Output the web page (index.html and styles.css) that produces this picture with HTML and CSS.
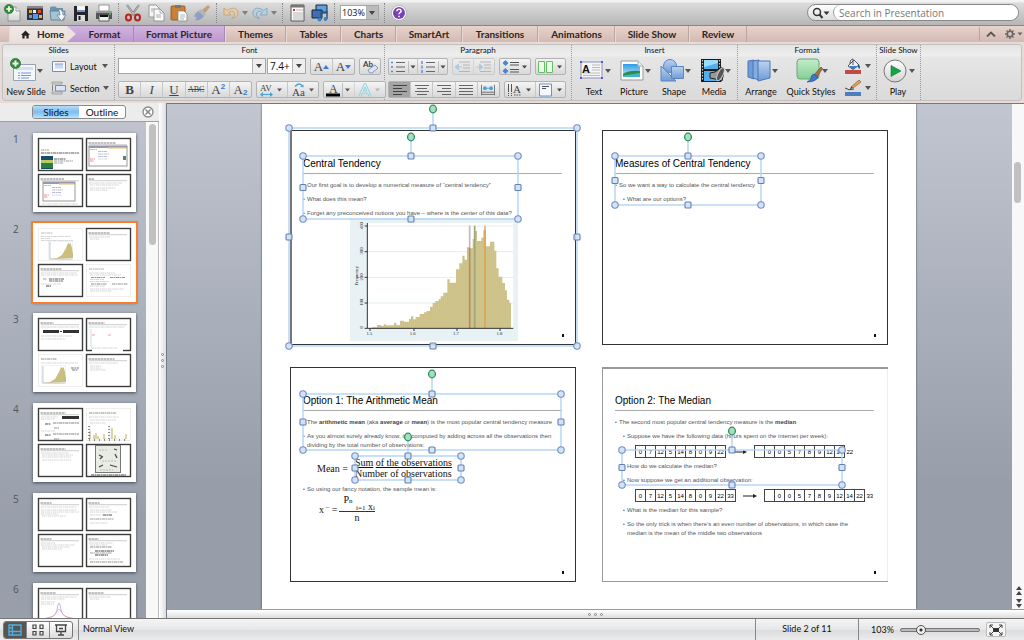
FILE: index.html
```html
<!DOCTYPE html>
<html lang="en">
<head>
<meta charset="utf-8">
<title>Presentation</title>
<link rel="stylesheet" href="styles.css">
</head>
<body>
<svg class="defs" aria-hidden="true">
  <defs>
    <linearGradient id="gBlue" x1="0" y1="0" x2="0" y2="1"><stop offset="0" stop-color="#bcd3f0"/><stop offset="1" stop-color="#6f9bd6"/></linearGradient>
    <linearGradient id="gGreen" x1="0" y1="0" x2="0" y2="1"><stop offset="0" stop-color="#c4eccb"/><stop offset="1" stop-color="#84cf93"/></linearGradient>
    <linearGradient id="gWhite" x1="0" y1="0" x2="0" y2="1"><stop offset="0" stop-color="#fff"/><stop offset="1" stop-color="#d4d4d4"/></linearGradient>
    <linearGradient id="gSky" x1="0" y1="0" x2="0" y2="1"><stop offset="0" stop-color="#2e9be6"/><stop offset="1" stop-color="#c8ecfb"/></linearGradient>
    <pattern id="bars" width="6" height="10" patternUnits="userSpaceOnUse"><rect width="6" height="10" fill="#d1c78f"/><rect width="1.5" height="10" fill="#c4b878"/></pattern>
    <symbol id="plus" viewBox="0 0 10 10"><circle cx="5" cy="5" r="4.6" fill="#2f8f36" stroke="#1d6a25" stroke-width=".6"/><path d="M5 2.3v5.4M2.3 5h5.4" stroke="#fff" stroke-width="1.7"/></symbol>
    <symbol id="lines" viewBox="0 0 14 12"><path d="M0 1.5h14M2 4.5h10M0 7.5h14M2 10.5h10" stroke="#666" stroke-width="1"/></symbol>
  </defs>
</svg>
<div class="app">
  <header class="toolbar">
    <div class="tools">
      <button aria-label="New presentation"><svg viewBox="0 0 18 18"><path d="M5 3h8l4 4v10H5z" fill="url(#gWhite)" stroke="#888" stroke-width=".8"/><path d="M13 3v4h4" fill="#eee" stroke="#888" stroke-width=".8"/><use href="#plus" x="1" y="0" width="10" height="10"/></svg></button>
      <button aria-label="Templates"><svg viewBox="0 0 18 18"><path d="M1 2h16v14H1z" fill="#33333b"/><path d="M1 2h16v2.500H1z" fill="#888"/><path d="M3 6h3v3H3z" fill="#f0a32c"/><path d="M7 6h3v3H7z" fill="#eee"/><path d="M12 6h3v3h-3z" fill="#e8482c"/><path d="M3 11h3v3H3z" fill="#51a0e6"/><path d="M7 10h5v5H7z" fill="#4e9af0"/><path d="M13 11h3v3h-3z" fill="#e7b837"/></svg></button>
      <button aria-label="Open"><svg viewBox="0 0 18 18"><path d="M1 4q0-1.500 1.500-1.500h4L8 4h6v3H1z" fill="#6b93ae"/><path d="M1 7h15l-1 9H2z" fill="#a4c4d6" stroke="#54798f" stroke-width=".8"/><path d="M9 5q5 0 5 6h3l-4.500 6L8 11h3q0-4-2-6z" fill="#f4f8fb" stroke="#668" stroke-width=".6"/></svg></button>
      <button aria-label="Save"><svg viewBox="0 0 18 18"><path d="M2 2h14v15H2z" fill="#25252b"/><path d="M5 2h8v6H5z" fill="#f5f5f5"/><path d="M5 11h8v6H5z" fill="#ddd"/><path d="M6.500 12h2v4h-2z" fill="#222"/><path d="M5 6h8v2H5z" fill="#6f94c8"/></svg></button>
      <button aria-label="Print"><svg viewBox="0 0 18 18"><path d="M4 1h10v6H4z" fill="#fff" stroke="#777" stroke-width=".7"/><path d="M1 7h16v8H1z" fill="#55565c"/><path d="M1 7h16v2H1z" fill="#999"/><path d="M4 11h10v6H4z" fill="#e8f0e8" stroke="#444" stroke-width=".8"/><path d="M5 11h8v2H5z" fill="#111"/><circle cx="15" cy="10" r=".8" fill="#5f5"/></svg></button>
      <i class="sep"></i>
      <button aria-label="Cut"><svg viewBox="0 0 18 18"><path d="M3 1l8 11M15 1L7 12" stroke="#777" stroke-width="2"/><path d="M3 1l8 11M15 1L7 12" stroke="#ddd" stroke-width=".7"/><ellipse cx="4.500" cy="13.500" rx="2.500" ry="3" fill="none" stroke="#b5231b" stroke-width="2"/><ellipse cx="13.500" cy="13.500" rx="2.500" ry="3" fill="none" stroke="#b5231b" stroke-width="2"/></svg></button>
      <button aria-label="Copy"><svg viewBox="0 0 18 18"><path d="M2 1h7l3 3v9H2z" fill="#f6f6f6" stroke="#888" stroke-width=".8"/><path d="M7 5h6l4 4v8H7z" fill="#fafafa" stroke="#888" stroke-width=".8"/><path d="M13 5v4h4M4 5h3M4 7h2M9 11h5M9 13h5" fill="none" stroke="#999" stroke-width=".8"/></svg></button>
      <button aria-label="Paste"><svg viewBox="0 0 18 18"><rect x="1" y="2" width="14" height="14" rx="1" fill="#c98235" stroke="#84501b" stroke-width=".8"/><path d="M5 1h6v3H5z" fill="#777"/><path d="M8 7h6l3 3v7H8z" fill="#fafafa" stroke="#888" stroke-width=".8"/><path d="M10 11h5M10 13h5M10 15h4" stroke="#aaa" stroke-width=".8"/></svg></button>
      <button aria-label="Format painter" class="dim"><svg viewBox="0 0 18 18"><path d="M15 1l2 2-5 6-3-3z" fill="#b98550"/><path d="M8 5l5 5-2 2-6-5z" fill="#aaa"/><path d="M5 7l6 5q-3 5-9 4 2-1 1-3-1-1-2 0 1-4 4-6z" fill="#6f8bc6"/></svg></button>
      <i class="sep"></i>
      <button aria-label="Undo" class="dim"><svg viewBox="0 0 18 18"><path d="M2 4v7h7L6.500 8.500q4-3 6 .5 1 3-3 5.500 7-1 6.500-6.500Q14 1 5 6.500z" fill="#f0cf9a" stroke="#c48d4b" stroke-width=".9"/></svg></button>
      <i class="tri dim"></i>
      <button aria-label="Redo" class="dim"><svg viewBox="0 0 18 18"><path d="M16 4v7H9l2.500-2.500q-4-3-6 .5-1 3 3 5.500Q1 13.500 2 8 4 1 13 6.500z" fill="#a9d2e8" stroke="#5e95b8" stroke-width=".9"/></svg></button>
      <i class="tri dim"></i>
      <i class="sep"></i>
      <button aria-label="Notes"><svg viewBox="0 0 18 18"><path d="M3 1h13v16H3z" fill="#fbfbfb" stroke="#555" stroke-width="1"/><path d="M3 1h13v2.500H3z" fill="#777"/><path d="M5 5h2v2H5z" fill="#d33"/><path d="M8 6h7M5 9h10M5 11h10M5 13h10M5 15h10" stroke="#999" stroke-width=".7"/></svg></button>
      <button aria-label="Media browser"><svg viewBox="0 0 18 18"><path d="M5 1h11v8H5z" fill="#5aa2e0" stroke="#223"/><path d="M1 6h10v8H1z" fill="#3d6fb1" stroke="#223"/><path d="M10 16V8h6v7" fill="none" stroke="#245a93" stroke-width="1.500"/><circle cx="8.500" cy="15.500" r="1.900" fill="#3a83c6"/><circle cx="14.500" cy="15" r="1.900" fill="#3a83c6"/></svg></button>
      <i class="sep"></i>
      <label class="combo zoom"><select aria-label="Zoom"><option>103%</option></select></label>
      <i class="sep"></i>
      <button aria-label="Help"><svg viewBox="0 0 18 18"><circle cx="9" cy="9" r="7.500" fill="#fff" stroke="#999" stroke-width=".6"/><circle cx="9" cy="9" r="6" fill="#7842b5"/><path d="M6.800 7.200q.2-2 2.200-2t2.200 1.800q0 1-1.200 1.700-1 .6-1 1.600M9 11.700v1.500" fill="none" stroke="#fff" stroke-width="1.500"/></svg></button>
    </div>
    <label class="search"><svg viewBox="0 0 20 12"><circle cx="6" cy="5" r="3.500" fill="none" stroke="#333" stroke-width="1.500"/><path d="M8.500 7.500L11.500 11" stroke="#333" stroke-width="2"/><path d="M12.500 4.500h6L15.500 8z" fill="#333"/></svg><input type="text" placeholder="Search in Presentation" aria-label="Search in Presentation"></label>
  </header>

  <nav class="tabs">
    <a href="#" class="home"><svg viewBox="0 0 10 9"><path d="M5 0l5 5H8.500v4h-2.500V6H4v3H1.500V5H0z" fill="#222"/></svg>Home</a>
    <a href="#" class="purple first">Format</a>
    <a href="#" class="purple">Format Picture</a>
    <a href="#">Themes</a>
    <a href="#">Tables</a>
    <a href="#">Charts</a>
    <a href="#">SmartArt</a>
    <a href="#">Transitions</a>
    <a href="#">Animations</a>
    <a href="#">Slide Show</a>
    <a href="#">Review</a>
    <span class="tabtools">
      <button aria-label="Collapse ribbon"><svg viewBox="0 0 10 6"><path d="M1 5.500l4-4 4 4" fill="none" stroke="#555" stroke-width="1.800"/></svg></button>
      <button aria-label="Ribbon settings"><svg viewBox="0 0 18 10"><circle cx="5" cy="5" r="2.700" fill="none" stroke="#666" stroke-width="1.600"/><path d="M5 0v2M5 8v2M0 5h2M8 5h2M1.500 1.500l1.300 1.300M7.200 7.200l1.300 1.300M1.500 8.500l1.300-1.300M7.200 2.800l1.300-1.300" stroke="#666" stroke-width="1.400"/><path d="M12.500 3.500h5L15 6.500z" fill="#666"/></svg></button>
    </span>
  </nav>

  <section class="ribbon">
    <div class="panel">
      <div class="group g-slides">
        <h2>Slides</h2>
        <div class="body">
          <button class="big"><span class="pic"><svg viewBox="0 0 28 25"><path d="M3.500 6.500h22v16h-22z" fill="#f3f6fa" stroke="#97a3b3"/><path d="M6 9h17v3H6z" fill="#d6e0ee"/><path d="M8 15h2M11 15h10M8 17.500h2M11 17.500h10M8 20h2M11 20h8" stroke="#6f9bd6"/><use href="#plus" x="0" y="0" width="11" height="11"/></svg><i class="tri"></i></span>New Slide</button>
          <div class="rows">
            <button class="lab"><svg viewBox="0 0 16 14"><path d="M1.500 2.500h13v10h-13z" fill="#f6f8fb" stroke="#7a8da8"/><path d="M4 5h8v4.500H4z" fill="#c9d8ee"/><path d="M4 5h8" stroke="#7d9fce"/></svg>Layout<i class="tri"></i></button>
            <button class="lab"><svg viewBox="0 0 16 14"><path d="M1 1h10v2H1zM1 11h10v2H1z" fill="#ddd" stroke="#888" stroke-width=".7"/><path d="M4.500 4.500h10v5.500h-10z" fill="#dbe6f5" stroke="#7a8da8"/><path d="M1.500 4v6" stroke="#888"/></svg>Section<i class="tri"></i></button>
          </div>
        </div>
      </div>

      <div class="group g-font">
        <h2>Font</h2>
        <div class="body rows">
          <div class="row">
            <label class="combo face"><select aria-label="Font"><option></option></select></label>
            <label class="combo size"><select aria-label="Font size"><option>7.4+</option></select></label>
            <span class="seg push"><button class="serif" aria-label="Grow font">A<i class="up"></i></button><button class="serif" aria-label="Shrink font">A<i class="tri blue"></i></button></span>
            <span class="seg"><button aria-label="Clear formatting"><svg viewBox="0 0 18 14"><text x="1" y="7" class="abc">Ab</text><path d="M6 10l7-5 3 3-6 5q-3 1-4-3z" fill="#dfe4f3" stroke="#7685ad" stroke-width=".8"/></svg></button></span>
          </div>
          <div class="row">
            <span class="seg six"><button class="serif"><b>B</b></button><button class="serif"><em>I</em></button><button class="serif"><u>U</u></button><button class="serif strike"><s>ABC</s></button><button class="serif">A<sup>2</sup></button><button class="serif">A<sub>2</sub></button></span>
            <span class="seg two"><button aria-label="Spacing"><svg viewBox="0 0 26 14"><text x="1" y="7.500" class="av">AV</text><path d="M1 11.500l3-2.500v5zM14 11.500l-3-2.500v5z" fill="#4ba3d6"/><path d="M3 11.500h8" stroke="#4ba3d6"/><path d="M18 5.500h5L20.500 8.500z" fill="#555"/></svg></button><button aria-label="Change case"><svg viewBox="0 0 26 14"><text x="2" y="12.500" class="av mid">Aa</text><path d="M5 3.500Q9-1 12 2.500" fill="none" stroke="#4ba3d6" stroke-width="1.400"/><path d="M10 3.500l3.500-2v3z" fill="#4ba3d6"/><path d="M19 5.500h5L21.500 8.500z" fill="#555"/></svg></button></span>
            <span class="seg two"><button aria-label="Font color"><svg viewBox="0 0 26 14"><text x="3" y="9.500" class="av big">A</text><path d="M0 10.500h14v3H0z" fill="#000"/><path d="M16.500 0v14" stroke="#aaa" stroke-width=".7"/><path d="M19 5.500h5L21.500 8.500z" fill="#555"/></svg></button><button aria-label="Text effects" class="dim"><svg viewBox="0 0 26 14"><path d="M3 13L8 1.500 13 13M5 9h6" fill="none" stroke="#3cc4d4" stroke-width="3"/><path d="M3 13L8 1.500 13 13M5 9h6" fill="none" stroke="#fff" stroke-width=".9"/><path d="M18 5.500h5L20.500 8.500z" fill="#888"/></svg></button></span>
          </div>
        </div>
      </div>

      <div class="group g-para">
        <h2>Paragraph</h2>
        <div class="body rows">
          <div class="row">
            <span class="seg two"><button aria-label="Bullets"><svg viewBox="0 0 26 12"><path d="M1 1.500h2M1 6h2M1 10.500h2" stroke="#4d86d4" stroke-width="1.600"/><path d="M6 1.500h9M6 6h9M6 10.500h9" stroke="#666"/><path d="M18.500 0v12" stroke="#aaa" stroke-width=".7"/><path d="M20.500 4.500h5L23 7.500z" fill="#444"/></svg></button><button aria-label="Numbering"><svg viewBox="0 0 26 12"><path d="M2 0v3M2 4.500v3M2 9v3" stroke="#4d86d4" stroke-width="1.300"/><path d="M6 1.500h9M6 6h9M6 10.500h9" stroke="#666"/><path d="M18.500 0v12" stroke="#aaa" stroke-width=".7"/><path d="M20.500 4.500h5L23 7.500z" fill="#444"/></svg></button></span>
            <span class="seg two dim"><button aria-label="Decrease indent"><svg viewBox="0 0 16 12"><path d="M4 1h11M8 4h7M8 7h7M4 10.500h11" stroke="#888"/><path d="M0 6l3.500-3v6zM3 6h4" stroke="#7bb3dc" fill="#7bb3dc"/></svg></button><button aria-label="Increase indent"><svg viewBox="0 0 16 12"><path d="M4 1h11M8 4h7M8 7h7M4 10.500h11" stroke="#888"/><path d="M7 6L3.500 3v6zM0 6h4" stroke="#7bb3dc" fill="#7bb3dc"/></svg></button></span>
            <span class="seg"><button aria-label="Line spacing"><svg viewBox="0 0 26 14"><path d="M3.500 0l3 3-3 3-3-3zM3.500 8l3 3-3 3-3-3z" fill="#4b86cc"/><path d="M8 2.500h9M8 5h9M8 9.500h9M8 12h9" stroke="#555"/><path d="M20 5.500h5L22.500 8.500z" fill="#444"/></svg></button></span>
            <span class="seg"><button aria-label="Columns"><svg viewBox="0 0 26 14"><path d="M1.500 1.500h6v11h-6zM9.500 1.500h6v11h-6z" fill="#eafbe9" stroke="#69bd69"/><path d="M20 5.500h5L22.500 8.500z" fill="#444"/></svg></button></span>
          </div>
          <div class="row">
            <span class="seg five"><button class="on" aria-label="Align left"><svg viewBox="0 0 14 12"><path d="M0 1.500h14M0 4.500h9M0 7.500h14M0 10.500h9" stroke="#444"/></svg></button><button aria-label="Center"><svg viewBox="0 0 14 12"><use href="#lines" width="14" height="12"/></svg></button><button aria-label="Align right"><svg viewBox="0 0 14 12"><path d="M0 1.500h14M5 4.500h9M0 7.500h14M5 10.500h9" stroke="#666"/></svg></button><button aria-label="Justify"><svg viewBox="0 0 14 12"><path d="M0 1.500h14M0 4.500h14M0 7.500h14M0 10.500h14" stroke="#666"/></svg></button><button aria-label="Distribute"><svg viewBox="0 0 16 12"><path d="M.5 0v12M15.500 0v12M1 8.500h14M1 11h14" stroke="#666"/><circle cx="4.500" cy="4" r="2.200" fill="#4ba3d6"/><circle cx="11.500" cy="4" r="2.200" fill="#4ba3d6"/><path d="M4 4h8" stroke="#4ba3d6"/></svg></button></span>
            <span class="seg two"><button aria-label="Text direction"><svg viewBox="0 0 26 14"><path d="M1.500 1v12M4.500 1v12" stroke="#555" stroke-dasharray="8 1 1 1"/><text x="6" y="9.500" class="av mid">A</text><path d="M7 12h7" stroke="#555" stroke-dasharray="1.500 1"/><path d="M19 5.500h5L21.500 8.500z" fill="#444"/></svg></button><button aria-label="Align text"><svg viewBox="0 0 26 14"><path d="M2.500 1h12v12h-12z" fill="#f4f8fe" stroke="#6f93c6"/><path d="M5 3.500h7M5 5.500h4" stroke="#555"/><path d="M20 5.500h5L22.500 8.500z" fill="#444"/></svg></button></span>
          </div>
        </div>
      </div>

      <div class="group g-insert">
        <h2>Insert</h2>
        <div class="body">
          <button class="big"><span class="pic"><svg viewBox="0 0 28 25"><path d="M3 4h21v16H3z" fill="#f5f5f7" stroke="#8894b8"/><path d="M14 7h8M14 9.500h8M14 12h8M5 15h17M5 17.500h17" stroke="#bbb"/><text x="4" y="15" class="boxa">A</text><path d="M2 3h2v2H2zM23 3h2v2h-2zM2 19h2v2H2zM23 19h2v2h-2z" fill="#5a55d8"/></svg><i class="tri"></i></span>Text</button>
          <button class="big"><span class="pic"><svg viewBox="0 0 28 25"><path d="M3 3h17l5 5v14H3z" fill="#fdfdfd" stroke="#999"/><path d="M5 6h14l3 3v10H5z" fill="url(#gSky)"/><path d="M5 16q6-4 17-3v6H5z" fill="#2e8b45"/><path d="M5 17.500l17-2.500v4H5z" fill="#3fb6c8"/><path d="M20 3v5h5" fill="#eee" stroke="#aaa"/></svg><i class="tri"></i></span>Picture</button>
          <button class="big"><span class="pic"><svg viewBox="0 0 28 25"><circle cx="12" cy="8" r="6.500" fill="url(#gBlue)" stroke="#5b86c2"/><path d="M3 8v15h15z" fill="url(#gBlue)" stroke="#5b86c2"/><path d="M13.500 8.500h12v12h-12z" fill="url(#gBlue)" stroke="#5b86c2"/></svg><i class="tri"></i></span>Shape</button>
          <button class="big"><span class="pic"><svg viewBox="0 0 28 25"><path d="M3 1h20v23H3z" fill="#18181c"/><path d="M6 2h14v9H6zM6 13h14v10H6z" fill="#4eb0ee"/><path d="M6 2h14v3L6 9z" fill="#9bdcfb"/><path d="M4.500 2v21M21.500 2v21" stroke="#ccc" stroke-width="1.200" stroke-dasharray="1.500 1.500"/><path d="M12 15l5-1 7-5q3 6 0 14l-7-2-5-1z" fill="#999" stroke="#222"/><ellipse cx="22.500" cy="16" rx="2.600" ry="7" transform="rotate(25 22 16)" fill="#555" stroke="#ccc"/></svg><i class="tri"></i></span>Media</button>
        </div>
      </div>

      <div class="group g-format">
        <h2>Format</h2>
        <div class="body">
          <button class="big"><span class="pic"><svg viewBox="0 0 28 25"><path d="M3 3l6-1v19l-6-2z" fill="#6f9bd6" stroke="#4c77b5"/><path d="M8 3l6-1v20l-6-2z" fill="#85abe0" stroke="#4c77b5"/><path d="M13 3h12v17l-12 3z" fill="url(#gBlue)" stroke="#4c77b5"/></svg><i class="tri"></i></span>Arrange</button>
          <button class="big wide"><span class="pic"><svg viewBox="0 0 28 25"><rect x="2" y="1" width="22" height="20" rx="3" fill="url(#gGreen)" stroke="#6aa877"/><path d="M26 9l1.500 1.500L22 19l-3-2z" fill="#a97548" stroke="#5c3e20" stroke-width=".6"/><path d="M19 16l4 3q-2 5-11 5 4-2 4-4 0-3 3-4z" fill="#3c78d0" stroke="#23407a" stroke-width=".6"/></svg><i class="tri"></i></span>Quick Styles</button>
          <div class="rows">
            <button class="lab" aria-label="Fill"><svg viewBox="0 0 18 16"><path d="M4 8l6-6 5 5-6 4.500z" fill="#eef" stroke="#556"/><path d="M5 8h9l-5 3.500z" fill="#3f7fc4"/><path d="M6 6q0-5 3-5v6" fill="none" stroke="#555"/><path d="M14 6q3 2 1.500 5-2-1-1.500-5" fill="#245a93"/><path d="M1 12h16v4H1z" fill="#c34a43"/></svg><i class="tri"></i></button>
            <button class="lab" aria-label="Line"><svg viewBox="0 0 18 16"><path d="M15 0l2 2-8 6-2-1z" fill="#e8a45c" stroke="#7a4a1c" stroke-width=".6"/><path d="M7 7l2 1-3 1z" fill="#222"/><path d="M1 8q4 3 9 1" fill="none" stroke="#444"/><path d="M1 12h16v4H1z" fill="#4a7fc0"/></svg><i class="tri"></i></button>
          </div>
        </div>
      </div>

      <div class="group g-show">
        <h2>Slide Show</h2>
        <div class="body">
          <button class="big"><span class="pic"><svg viewBox="0 0 28 25"><circle cx="13" cy="13" r="11" fill="url(#gWhite)" stroke="#777"/><path d="M9 7.500l10 5.500-10 5.500z" fill="#16a34a" stroke="#0c7a36" stroke-width=".6"/></svg><i class="tri"></i></span>Play</button>
        </div>
      </div>
    </div>
  </section>

  <main class="work">
    <aside class="side">
      <div class="sidehead">
        <span class="switch"><button class="on">Slides</button><button>Outline</button></span>
        <button class="close" aria-label="Close pane"><svg viewBox="0 0 12 12"><circle cx="6" cy="6" r="5" fill="#fff" stroke="#888" stroke-width="1.300"/><path d="M3.500 3.500l5 5M8.500 3.500l-5 5" stroke="#888" stroke-width="1.600"/></svg></button>
      </div>
      <div class="sidebody">
        <ol class="thumbs" id="thumbs"></ol>
        <div class="vbar"><i class="knob long"></i></div>
      </div>
    </aside>
    <div class="split"><i></i><i></i><i></i></div>
    <div class="editor">
      <div class="stage">
        <div class="canvas">
          <div class="page">
            <article class="slide heavy">
              <h3>Central Tendency</h3>
              <ul>
                <li>Our first goal is to develop a numerical measure of “central tendency”</li>
                <li>What does this mean?</li>
                <li>Forget any preconceived notions you have – where is the center of this data?</li>
              </ul>
              <svg class="chart" viewBox="208 9 504 369">
                <path d="M208 9h504v369H208z" fill="#e8f1f4"/>
                <path d="M260 24h438v316H260z" fill="#fff"/>
                <path d="M260 33h438M260 110h438M260 187h438M260 264h438" stroke="#e3eef0" stroke-width="3"/>
                <path fill="url(#bars)" d="M273 340V337H289V330H302V333H309V328H316V331H340V323H347V330H358V317H370V320H385V312H391V304H398V313H405V306H417V297H430V292H438V288H448V275H456V264H464V258H474V252H480V244H488V233H500V193H507V203H526V163H536V145H545V122H552V134H559V97H567V100H576V72H582V48H589V78H602V68H608V45H616V94H628V80H641V107H647V160H654V185H665V204H673V226H679V254H686V264H691V340Z"/>
                <path d="M567 32v68" stroke="#c9b3bd" stroke-width="5"/><path d="M567 98v242" stroke="#b98a62" stroke-width="5"/>
                <path d="M582 32v308" stroke="#9ea778" stroke-width="5"/><path d="M613 32v308" stroke="#dd9f4a" stroke-width="4"/>
                <path d="M260 24v316h438M252 33h8M252 110h8M252 187h8M252 264h8M252 340h8M268 340v8M400 340v8M529 340v8M658 340v8" fill="none" stroke="#333" stroke-width="3"/>
                <g class="ticks">
                  <text x="266" y="359">1.5</text><text x="396" y="359">1.6</text><text x="526" y="359">1.7</text><text x="656" y="359">1.8</text>
                  <text transform="translate(246 338) rotate(-90)">0</text><text transform="translate(246 262) rotate(-90)">100</text><text transform="translate(246 186) rotate(-90)">200</text><text transform="translate(246 108) rotate(-90)">300</text><text transform="translate(246 32) rotate(-90)">400</text>
                  <text transform="translate(231 182) rotate(-90)">Frequency</text>
                </g>
              </svg>
              <i class="folio"></i>
              <svg class="marks" viewBox="290 130 286 215" data-boxes="289,128,577,346,433,109;303,156,518,219,411,137"></svg>
            </article>

            <article class="slide">
              <h3>Measures of Central Tendency</h3>
              <ul>
                <li>So we want a way to calculate the central tendency</li>
                <li class="in">What are our options?</li>
              </ul>
              <i class="folio"></i>
              <svg class="marks" viewBox="602 130 286 215" data-boxes="615,156,761,205,688,137"></svg>
            </article>

            <article class="slide">
              <h3>Option 1: The Arithmetic Mean</h3>
              <ul>
                <li>The <b>arithmetic mean</b> (aka <b>average</b> or <b>mean</b>) is the most popular central tendency measure</li>
                <li>As you almost surely already know, it’s computed by adding across all the observations then dividing by the total number of observations:</li>
              </ul>
              <div class="math">Mean = <span class="frac"><span><u>Sum</u> <u>of the observations</u></span><span>Number of observations</span></span></div>
              <ul>
                <li>So using our fancy notation, the sample mean is:</li>
              </ul>
              <div class="math second"><span>x<sup> –</sup> =</span><span class="frac bar"><span class="top">P<small>n</small></span><span class="num"><small>i=1</small> x<small>i</small></span><span class="den">n</span></span></div>
              <i class="folio"></i>
              <svg class="marks" viewBox="290 367 286 215" data-boxes="303,394,561,450,432,374;355,456,461,480,408,437"></svg>
            </article>

            <article class="slide soft">
              <h3>Option 2: The Median</h3>
              <ul>
                <li>The second most popular central tendency measure is the <b>median</b></li>
                <li class="in">Suppose we have the following data (hours spent on the internet per week):</li>
              </ul>
              <div class="data">
                <table><tr><td>0<td>7<td>12<td>5<td>14<td>8<td>0<td>9<td>22</table>
                <svg viewBox="0 0 14 6"><path d="M0 3h11" stroke="#222"/><path d="M10 1l4 2-4 2z" fill="#222"/></svg>
                <table><tr><td><td>0<td>0<td>5<td>7<td>8<td>9<td>12<td>14<td class="out">22</table>
              </div>
              <ul>
                <li class="in">How do we calculate the median?</li>
                <li class="in">Now suppose we get an additional observation:</li>
              </ul>
              <div class="data">
                <table><tr><td>0<td>7<td>12<td>5<td>14<td>8<td>0<td>9<td>22<td>33</table>
                <svg viewBox="0 0 14 6"><path d="M0 3h11" stroke="#222"/><path d="M10 1l4 2-4 2z" fill="#222"/></svg>
                <table><tr><td><td>0<td>0<td>5<td>7<td>8<td>9<td>12<td>14<td>22<td class="out">33</table>
              </div>
              <ul>
                <li class="in">What is the median for this sample?</li>
                <li class="in narrow">So the only trick is when there’s an even number of observations, in which case the median is the mean of the middle two observations</li>
              </ul>
              <i class="folio"></i>
              <svg class="marks" viewBox="602 367 286 215" data-boxes="622,450,842,485,732,431"></svg>
            </article>
          </div>
        </div>
        <div class="vbar right"><i class="knob"></i><svg viewBox="0 0 10 24"><path d="M5 1l3 4H2zM5 6l3 4H2zM2 14h6l-3 4zM2 19h6l-3 4z" fill="#444"/></svg></div>
      </div>
      <div class="notes"><i></i><i></i><i></i></div>
    </div>
  </main>

  <footer class="status">
    <span class="views">
      <button class="on" aria-label="Normal view"><svg viewBox="0 0 14 12"><path d="M1 1h12v10H1zM4.500 1v10M1 7.500h12M1 4h3.500" fill="none" stroke="#55aee0" stroke-width="1.300"/></svg></button>
      <button aria-label="Slide sorter"><svg viewBox="0 0 14 12"><path d="M2 1h3v3.500H2zM9 1h3v3.500H9zM2 7.500h3V11H2zM9 7.500h3V11H9z" fill="none" stroke="#444" stroke-width="1.200"/></svg></button>
      <button aria-label="Slide show"><svg viewBox="0 0 14 12"><path d="M1 1h12M2.500 1v6.500h9V1M7 7.500V11M4 11h6M5 4.500h4" fill="none" stroke="#444" stroke-width="1.300"/></svg></button>
    </span>
    <span class="cell mode">Normal View</span>
    <span class="cell count">Slide 2 of 11</span>
    <span class="cell zoomer"><label for="zoom">103%</label><input id="zoom" type="range" min="0" max="100" value="22"><button class="fit" aria-label="Fit to window"><svg viewBox="0 0 14 12"><path d="M4 4h6v4H4z" fill="#333"/><path d="M1 4V1h3M10 1h3v3M13 8v3h-3M4 11H1V8M1 1l3 3M13 1l-3 3M13 11l-3-3M1 11l3-3" fill="none" stroke="#333" stroke-width=".9"/></svg></button></span>
  </footer>
</div>
<script src="app.js"></script>
</body>
</html>
```

FILE: styles.css
```css
* { box-sizing: border-box; }
body { margin: 0; font: 9px/11px Lato, "Open Sans", sans-serif; color: #111; }
button { font: inherit; color: inherit; background: none; border: 0; padding: 0; display: flex; align-items: center; justify-content: center; }
a { color: inherit; text-decoration: none; }
h2, h3, ul, ol { margin: 0; padding: 0; font-weight: 400; list-style: none; }
svg { display: block; flex: none; }
.defs { position: absolute; width: 0; height: 0; }
.app { display: flex; flex-direction: column; height: 100vh; overflow: hidden; background: #cfc5c2; }
.dim { opacity: .5; }

.tri { flex: none; border: 3px solid transparent; border-top: 4px solid #555; border-bottom: 0; }
.tri.blue { border-top-color: #3f78d0; }
.up { flex: none; border: 3px solid transparent; border-bottom: 4px solid #3f78d0; border-top: 0; }

/* toolbar */
.toolbar { flex: none; height: 26px; display: flex; align-items: center; justify-content: space-between; padding: 0 5px 0 3px; background: linear-gradient(#f2f2f2 2px, #dcdcdc 3px, #b6b6b6); border-bottom: 1px solid #8a8482; }
.tools { display: flex; align-items: center; gap: 5px; }
.tools button svg { width: 18px; height: 18px; }
.tools .dim { opacity: .65; }
.tools .tri { margin-left: -3px; }
.tools .tri + button { margin-left: -2px; }
.sep { width: 1px; height: 20px; border-left: 1px dotted #888; }
.combo { position: relative; display: flex; height: 16px; background: #fff; border: 1px solid #a5a5a5; }
.combo select { appearance: none; width: 100%; border: 0; padding: 0 2px; background: none; font: 10px/14px "Open Sans", sans-serif; color: #111; }
.combo::after { content: ""; position: absolute; right: 3px; top: 5px; border: 3px solid transparent; border-top: 4px solid #444; border-bottom: 0; }
.combo::before { content: ""; position: absolute; right: 0; top: 0; bottom: 0; width: 12px; border-left: 1px solid #b5b5b5; background: #eee; }
.combo.zoom { width: 39px; height: 15px; }
.combo.zoom select { padding: 0 1px; font-size: 9px; line-height: 13px; }
.combo.zoom::before { background: #bbb; width: 11px; }
.search { display: flex; align-items: center; width: 212px; height: 17px; border: 1px solid #888; border-radius: 9px; background: linear-gradient(#fff, #ddd); overflow: hidden; }
.search svg { width: 20px; height: 12px; margin: 0 2px 0 3px; }
.search input { flex: 1; min-width: 0; height: 15px; border: 0; border-left: 1px solid #999; border-radius: 8px; padding: 0 5px; font: 10px/14px "Open Sans", sans-serif; background: #fff; }
.search input::placeholder { color: #777; }

/* tabs */
.tabs { flex: none; display: grid; grid-template-columns: 67px 67px 91px 61px 55px 55px 66px 76px 77px 74px 58px 1fr; height: 16px; background: linear-gradient(#e6d3cc, #d3bab2); font: 700 10px/16px Lato, sans-serif; color: #2c2624; }
.tabs a { display: flex; align-items: center; justify-content: center; border-right: 1px solid #bda69f; border-left: 1px solid #e9d9d4; }
.tabs .home { position: relative; margin-left: 9px; padding-left: 8px; gap: 7px; border-right: 0; background: linear-gradient(#f2e8e5, #e9dfdb); }
.tabs .home::after { content: ""; position: absolute; left: 100%; top: 0; border: solid transparent; border-width: 8px 0 8px 9px; border-left-color: #ece2de; }
.tabs .home svg { width: 9px; height: 9px; }
.tabs .purple { background: linear-gradient(#d0b4de, #bd98cf); border-color: #a989b8; border-left: 0; }
.tabs .first { padding-left: 9px; }
.tabtools { display: flex; justify-content: flex-end; align-items: center; gap: 9px; padding-right: 1px; }
.tabtools svg { height: 6px; width: 10px; }
.tabtools button:first-child { border-left: 1px solid #bda69f; height: 14px; padding-left: 6px; }
.tabtools button:last-child svg { width: 18px; height: 10px; }

/* ribbon */
.ribbon { flex: none; padding: 2px 2px 2px; background: #e6dbd7; }
.panel { display: flex; height: 57px; border: 1px solid #c5bfbd; border-radius: 3px; background: linear-gradient(#e4e4e4, #eee 11px, #e6e6e6 12px, #dadada); }
.group { flex: none; padding: 0 3px; border-right: 1px dotted #999; }
.group h2 { height: 11px; text-align: center; font-size: 8px; line-height: 11px; }
.body { display: flex; padding-top: 2px; }
.rows { display: flex; flex-direction: column; gap: 6px; }
.row { display: flex; gap: 4px; height: 17px; }
.g-slides { width: 112px; }
.g-font { width: 270px; }
.g-para { width: 187px; }
.g-insert { width: 166px; padding: 0 2px; }
.g-format { width: 139px; }
.g-show { width: 44px; padding: 0 1px; white-space: nowrap; }
.big { flex-direction: column; width: 40px; gap: 3px; white-space: nowrap; }
.big .pic { display: flex; align-items: center; }
.big .pic svg { width: 28px; height: 25px; }
.big .tri { margin-left: -1px; }
.wide { width: 60px; }
.g-slides .rows { margin-left: 5px; }
.lab { height: 16px; gap: 3px; }
.lab svg { width: 16px; height: 14px; }
.lab .tri { margin-left: auto; }
.g-slides .lab { width: 57px; justify-content: flex-start; }
.g-format .rows .lab svg { width: 18px; height: 16px; }
.g-format .rows { margin-left: 3px; }

.seg { display: flex; border: 1px solid #b3b3b3; border-radius: 2px; background: linear-gradient(#f4f4f4, #d8d8d8); height: 17px; }
.seg button { flex: 1; padding: 0 2px; border-left: 1px solid #c6c6c6; }
.seg button:first-child { border-left: 0; }
.seg svg { height: 14px; width: 26px; }
.seg .on { background: #a4a4a4; }
.seg.six { flex: 135; }
.seg.two { flex: 61; }
.row .seg.push { width: 45px; }
.g-font .row .seg:last-child:not(.two) { width: 22px; }
.g-font .row:first-child .seg svg { width: 18px; }
.g-font .seg.six button { width: 22px; }
.serif { font: 13px/15px "Liberation Serif", serif; color: #444; }
.serif sup, .serif sub { font-size: 8px; line-height: 8px; color: #3f78d0; font-weight: 700; font-family: "Liberation Sans", sans-serif; }
.serif sup { margin-bottom: 6px; }
.serif sub { margin-top: 6px; }
.strike { font-size: 8px; }
.face { flex: 1; }
.size { width: 39px; margin-left: -3px; }
.abc { font: 700 8px Lato, sans-serif; fill: #444; }
.av { font: 9px "Liberation Serif", serif; fill: #444; }
.av.mid { font-size: 11px; }
.av.big { font-size: 12px; }
.boxa { font: 700 11px "Liberation Sans", sans-serif; fill: #111; }
.g-para .row { width: 178px; }
.g-para .seg.five { flex: 112; }
.g-para .seg.five svg { width: 14px; height: 12px; }
.g-para .seg:not(.two):not(.five) { flex: 31; }
.g-para .dim { flex: 44; }
.g-para .dim svg { width: 16px; height: 12px; }
.g-para .row:first-child .two:not(.dim) svg { height: 12px; }
.g-para .seg button { padding: 0; }

/* work area */
.work { flex: 1; min-height: 0; display: flex; }
.side { flex: none; width: 159px; display: flex; flex-direction: column; }
.sidehead { flex: none; display: flex; align-items: center; justify-content: space-between; height: 19px; padding: 0 5px 0 32px; background: #ececec; border-bottom: 1px solid #9a9fa8; }
.switch { display: flex; width: 94px; height: 14px; border: 1px solid #8b8b8b; border-radius: 3px; background: #fff; overflow: hidden; font: 10px/12px Lato, sans-serif; }
.switch button { flex: 1; }
.switch .on { background: linear-gradient(#b9dcf8, #7cbcf0 50%, #b5e4fd); }
.close svg { width: 12px; height: 12px; }
.sidebody { flex: 1; min-height: 0; display: flex; background: linear-gradient(#bec3cd, #989fab 80%); }
.thumbs { flex: 1; display: flex; flex-direction: column; gap: 11px; padding: 11px 10px 0 13px; overflow: hidden; }
.thumbs li { flex: none; display: flex; justify-content: space-between; font: 10px/12px "Open Sans", sans-serif; color: #555; }
.thumbs svg { width: 103px; height: 79px; background: #fff; box-shadow: 0 1px 3px #444b58; }
.thumbs .current svg { outline: 2px solid #fb7c2b; }
.vbar { flex: none; display: flex; flex-direction: column; width: 13px; padding: 2px 3px; background: #f8f8f8; border-right: 1px solid #bbb; }
.knob { width: 7px; height: 41px; border-radius: 4px; background: #c1c1c1; }
.knob.long { height: 121px; }
.split { flex: none; width: 8px; display: flex; flex-direction: column; align-items: center; justify-content: center; gap: 3px; background: linear-gradient(90deg, #fff, #ddd); border-right: 1px solid #777d88; }
.split i, .notes i { width: 3px; height: 3px; border: 1px solid #888; border-radius: 2px; }
.editor { flex: 1; min-width: 0; display: flex; flex-direction: column; }
.stage { flex: 1; min-height: 0; display: flex; border-top: 1px solid #777; }
.canvas { flex: 1; min-width: 0; display: flex; padding: 0 96px 0 95px; background: linear-gradient(#c1c6d0, #979eaa 75%); overflow: hidden; }
.page { flex: 1; display: grid; grid-template: 1fr 1fr / 1fr 1fr; gap: 22px 26px; padding: 26px 28px 27px; background: #fff; box-shadow: 0 0 2px #444; }
.right { width: 12px; border: 0; justify-content: space-between; padding: 58px 2px 0; }
.right svg { width: 10px; height: 24px; }
.notes { flex: none; height: 9px; display: flex; align-items: center; justify-content: center; gap: 3px; background: linear-gradient(#fff, #ddd); border-top: 1px solid #999; }

/* slides */
.slide { position: relative; padding: 28px 13px 0; box-shadow: inset 0 0 0 1px #333; font: 6px/9px "Liberation Sans", Arial, sans-serif; color: #555; }
.heavy { box-shadow: inset 2px 0 #777, inset 0 0 0 1px #333; }
.soft { box-shadow: inset 1px 2px #999, inset 0 -1px #999, inset -1px 0 #eee; }
.slide h3 { font-size: 10px; line-height: 12px; color: #000; padding-bottom: 3px; margin: 0 1px 7px 0; border-bottom: 1px solid #aaa; }
.slide li { position: relative; padding-left: 4px; margin-bottom: 5px; }
.slide li::before { content: "•"; position: absolute; left: 0; font-size: 5px; }
.slide .in { margin-left: 8px; }
.slide .narrow { margin-right: 20px; }
.slide b { color: #444; }
.folio { position: absolute; right: 12px; bottom: 8px; width: 2px; height: 3px; background: #111; }
.chart { width: 168px; height: 123px; margin: -5px 0 0 47px; }
.ticks { font: 14px "Liberation Serif", serif; fill: #222; text-anchor: middle; }
.marks { position: absolute; left: 0; top: 0; width: 286px; height: 215px; overflow: visible; }
.math { display: flex; align-items: center; gap: 6px; margin: 7px 0 6px 14px; font: 10px/11px "Liberation Serif", serif; color: #111; }
.frac { display: flex; flex-direction: column; padding-left: 1px; }
.math.second { gap: 1px; margin: -3px 0 0 16px; }
.math.second sup, .math small { font-size: 7px; line-height: 6px; }
.bar { align-items: center; width: 36px; }
.top { align-self: flex-start; height: 7px; line-height: 7px; padding-left: 4px; }
.num { width: 36px; height: 9px; text-align: right; line-height: 8px; border-bottom: 1px solid #333; }
.den { line-height: 12px; }
.data { display: flex; align-items: center; gap: 7px; margin: -1px 0 4px 20px; }
.data svg { width: 14px; height: 6px; }
.data table { border-collapse: collapse; table-layout: fixed; font: 6px/10px "Liberation Sans", Arial, sans-serif; color: #000; }
.data td { width: 10px; min-width: 10px; height: 12px; padding: 0; border: 1px solid #444; text-align: center; }
.data .out { border: 0; }

/* status bar */
.status { flex: none; height: 22px; display: flex; align-items: center; background: linear-gradient(#f4f4f4, #e6e7e9 50%, #dadbdd 51%, #ececec); border-top: 1px solid #777; font: 9px/20px Lato, sans-serif; }
.views { display: flex; width: 70px; height: 18px; margin: 0 5px 0 3px; border: 1px solid #777; border-radius: 3px; background: linear-gradient(#fff, #ddd); overflow: hidden; }
.views button { flex: 1; border-left: 1px solid #888; }
.views button:first-child { border-left: 0; }
.views .on { background: #555; }
.views svg { width: 14px; height: 12px; }
.cell { border-left: 1px solid #888; height: 21px; padding-left: 4px; }
.mode { flex: 1; }
.count { width: 103px; padding: 0; text-align: center; }
.zoomer { display: flex; align-items: center; gap: 6px; width: 166px; padding-left: 12px; }
.zoomer input { appearance: none; width: 80px; height: 4px; margin: 0; border: 1px solid #777; border-radius: 2px; background: #bbb; }
.zoomer input::-webkit-slider-thumb { appearance: none; width: 10px; height: 10px; border: 1px solid #555; border-radius: 50%; background: radial-gradient(#333 1px, #eee 2px); }
.fit { width: 20px; height: 15px; border: 1px solid #bbb; border-radius: 2px; background: #f4f4f4; }
.fit svg { width: 14px; height: 12px; }
```

FILE: app.js
```js
// Selection frames: "left,top,right,bottom,rotateX,rotateY", separated by semicolons.
document.querySelectorAll('.marks').forEach(function (svg) {
  var out = '';
  svg.dataset.boxes.split(';').forEach(function (box) {
    var v = box.split(',').map(Number), l = v[0], t = v[1], r = v[2], b = v[3], x = v[4], y = v[5];
    var my = (t + b) / 2;
    out += '<path d="M' + l + ' ' + t + 'H' + r + 'V' + b + 'H' + l + 'ZM' + x + ' ' + t + 'V' + y + '" fill="none" stroke="#b4d1f5" stroke-opacity=".7" stroke-width="2"/>';
    [[l, t], [r, t], [l, b], [r, b]].forEach(function (p) {
      out += '<circle cx="' + p[0] + '" cy="' + p[1] + '" r="3.2" fill="#d3e1f4" fill-opacity=".9" stroke="#6f8ec6" stroke-width="1.1"/>';
    });
    [[x, t], [x, b], [l, my], [r, my]].forEach(function (p) {
      out += '<rect x="' + (p[0] - 3) + '" y="' + (p[1] - 3) + '" width="6" height="6" rx="1" fill="#d3e1f4" fill-opacity=".9" stroke="#6180b4" stroke-width="1.1"/>';
    });
    out += '<ellipse cx="' + x + '" cy="' + y + '" rx="3.4" ry="3.8" fill="#a5dfbd" stroke="#2f9160" stroke-width="1.3"/>';
  });
  svg.innerHTML = out;
});

// Thumbnails: each quarter has a frame style, a title width and text rows [x, y, width].
var origin = [[5, 5], [53, 5], [5, 41], [53, 41]];
function rect(x, y, w, h, c) { return '<rect x="' + x + '" y="' + y + '" width="' + w + '" height="' + h + '" fill="' + c + '"/>'; }
function row(x, y, w, c) { return '<path d="M' + x + ' ' + y + 'h' + w + '" stroke="' + (c || '#ccc') + '" stroke-width=".8" stroke-dasharray="3 .5 2 .5"/>'; }
function quarter(i, q) {
  var f = q.soft ? '#ddd' : '#3c3c3c';
  var s = '<g transform="translate(' + origin[i] + ')"><rect x=".5" y=".5" width="44" height="32" fill="#fff" stroke="' + f + '" stroke-width="' + (q.soft ? 0.5 : 1.4) + '"/>';
  if (q.title) s += row(2.5, 5, q.title, '#666') + '<path d="M3 6.700h38" stroke="#aaa" stroke-width=".6"/>';
  (q.rows || []).forEach(function (r) { s += row(r[0], r[1], r[2], r[3]); });
  return s + (q.art || '') + '</g>';
}
function hist(x, y) {
  return rect(x, y, 25, 19, '#edf4f6') + rect(x + 2, y + 1, 22, 17, '#fff') + '<path d="M' + (x + 2) + ' ' + (y + 18) + 'l7-1 5-3 4-7 2-5 1.500 1 1-1 1.500 5 1 6v4z" fill="#cbbf7f"/><path d="M' + (x + 2) + ' ' + (y + 1) + 'v17h22" fill="none" stroke="#999" stroke-width=".5"/>';
}
function shot(x, y, w, h) {
  return '<rect x="' + x + '" y="' + y + '" width="' + w + '" height="' + h + '" fill="#fff" stroke="#999" stroke-width="1"/>' + rect(x, y, w, 2, '#99a') + rect(x + w / 2, y + 1, w / 2 - 1, 1.5, '#e9bd62') + row(x + 1, y + 3.5, 7, '#d99') + row(x + 9, y + 5.5, 9, '#aac') + row(x + 9, y + 8, 11, '#aac') + row(x + 9, y + 10.5, 9, '#aac') + row(x + 1, y + 13, 5, '#e77') + row(x + 1, y + 15, 4, '#d77') + row(x + 9, y + 13, 10, '#ccd');
}
var body = [[3, 9, 36], [3, 11.5, 31]];
var decks = [
  [{ rows: [[3, 12, 8, '#888'], [3, 15, 38, '#333'], [16, 21, 12, '#333'], [16, 23, 19, '#888'], [16, 25, 9, '#888']], art: rect(3, 18, 12, 13, '#14506a') + rect(3, 22, 12, 3, '#b9c96b') + rect(3, 25, 12, 5, '#2c803a') },
    { title: 27, art: shot(3, 8, 38, 20) + rect(37, 18, 3, 4, '#587') }, { title: 24, art: shot(5, 8, 32, 19), rows: [[4, 30, 36]] }, { title: 6, rows: [[3, 9, 33], [4, 11, 29], [4, 14, 25], [4, 16, 18]] }],
  [{ soft: 1, rows: [[3, 5, 12, '#aaa'], [3, 8.5, 30], [3, 10.5, 9], [3, 12.5, 32]], art: hist(10, 13) }, { title: 21, rows: [[3, 9, 21], [4, 11, 9]] },
    { title: 21, rows: [[3, 9, 36], [3, 11, 37], [11, 15, 15, '#333'], [11, 17, 14, '#444'], [5, 15, 4, '#888'], [3, 20, 20], [8, 22, 5, '#111']] }, { soft: 1, rows: [[3, 5, 15, '#999'], [3, 9, 26], [4, 11, 31], [5, 13.5, 14, '#777'], [24, 13.5, 15, '#777'], [4, 15.5, 14], [4, 17.5, 19], [5, 20, 16, '#777'], [26, 20, 16, '#777'], [4, 22, 15], [4, 25, 34], [4, 27, 22]] }],
  [{ title: 13, rows: [[3, 9, 38], [3, 18, 31], [3, 21, 25]], art: rect(5, 12, 16, 3, '#333') + rect(25, 12, 16, 3, '#333') + rect(22, 13, 2, 1, '#333') }, { title: 16, rows: [[3, 9, 36], [6, 17, 3, '#e88'], [22, 17, 3, '#e88'], [5, 30, 26]], art: '<path d="M5 11v18" stroke="#9cc" stroke-width=".6"/>' + rect(6, 31, 31, 3, '#fff') },
    { soft: 1, rows: [[3, 5, 16, '#777'], [3, 9, 37], [33, 14, 8, '#555'], [34, 16, 6, '#555']], art: hist(3, 11) }, { title: 26, rows: [[3, 9, 29], [4, 12, 11], [4, 14, 12], [4, 16, 16]] }],
  [{ title: 25, rows: [[3, 9, 17], [3, 11, 14], [7, 16, 6, '#222'], [15, 15, 26, '#666'], [16, 20, 5, '#777'], [3, 23, 14], [7, 27, 6, '#222'], [15, 26, 26, '#666'], [16, 31, 5, '#777']], art: rect(24, 8, 17, 3, '#333') },
    { soft: 1, rows: [[3, 5, 27, '#777'], [3, 9, 30], [4, 12, 26], [4, 15, 16]], art: '<path d="M4 18v13h17M24 18v13h17" fill="none" stroke="#dde8ea" stroke-width=".8"/><path d="M4 31v-8M8 31v-4M10 31v-6M12 31v-3M18 31v-5M26 31V20M29 31v-4M40 31v-5" fill="none" stroke="#c9bb72" stroke-width="1.200"/><path d="M3 18v13M23 18v13" stroke="#222" stroke-dasharray="1 2"/><path d="M3 32h39" stroke="#222" stroke-dasharray="1 4"/>' },
    { title: 25, rows: [[3, 9, 28], [4, 11, 31], [4, 13, 29], [4, 16, 29]] }, { rows: [[5, 31, 35, '#222']], art: rect(9, 1, 26, 28, '#777') + rect(10, 2, 24, 26, '#e9ebe5') + '<path d="M13 11l4 2M28 5l3 1M14 15l2-2M29 10l2 4M24 21l7 2M13 23l4-2" stroke="#454b45" stroke-width="1.300"/><path d="M13 6h9M16 17h14M14 26h13" stroke="#a9b0a6" stroke-width=".8" stroke-dasharray="2 1"/>' }],
  [{ title: 11, rows: [[3, 9, 36], [3, 12, 36], [3, 14, 38], [3, 16, 18], [4, 18, 24]] }, { title: 11, rows: [[3, 9, 20], [4, 12, 22], [4, 14, 27], [4, 17, 13], [17, 17, 9, '#222'], [4, 21, 24, '#888'], [4, 25, 18]] },
    { title: 11, rows: [[3, 9, 14], [3, 11, 34], [4, 13, 28], [4, 15, 20]] }, { title: 10, rows: [[3, 9, 24], [4, 11, 18], [4, 13, 22, '#777'], [9, 17, 19, '#111'], [4, 19, 22, '#888'], [9, 21, 13, '#111'], [3, 25, 31], [4, 28, 33, '#777']] }],
  [{ title: 15, rows: [[3, 9, 36], [3, 11, 24], [3, 14, 14], [3, 16, 13]], art: '<path d="M9 30q8 0 10-8 1-7 2-7t2 7q2 8 10 8" fill="none" stroke="#99e" stroke-width=".7"/><path d="M8 30q8-1 10-5 2-4 3-4t3 4q2 4 11 5" fill="none" stroke="#e99" stroke-width=".6"/>' }, { title: 15, rows: [[3, 9, 22], [4, 11, 9]] }, { title: 15, rows: body }, { title: 15, rows: body }]
];
document.getElementById('thumbs').innerHTML = decks.map(function (deck, n) {
  return '<li' + (n === 1 ? ' class="current"' : '') + '><span>' + (n + 1) + '</span><svg viewBox="0 0 103 79">' + deck.map(function (q, i) { return quarter(i, q); }).join('') + '</svg></li>';
}).join('');
```
